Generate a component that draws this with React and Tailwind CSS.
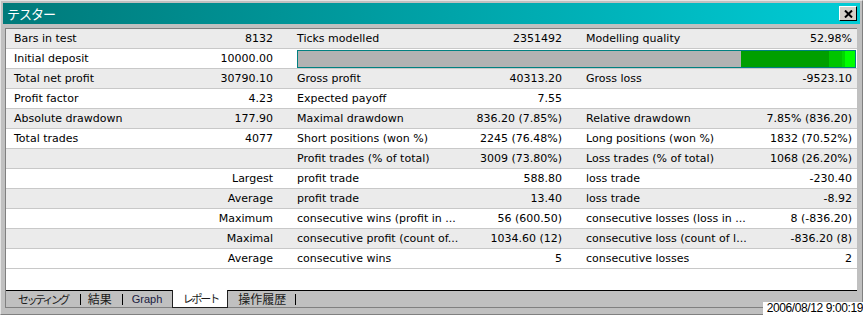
import React from 'react'

const rows = [
  ['Bars in test', '8132', 'Ticks modelled', '2351492', 'Modelling quality', '52.98%'],
  ['Initial deposit', '10000.00', null],
  ['Total net profit', '30790.10', 'Gross profit', '40313.20', 'Gross loss', '-9523.10'],
  ['Profit factor', '4.23', 'Expected payoff', '7.55', '', ''],
  ['Absolute drawdown', '177.90', 'Maximal drawdown', '836.20 (7.85%)', 'Relative drawdown', '7.85% (836.20)'],
  ['Total trades', '4077', 'Short positions (won %)', '2245 (76.48%)', 'Long positions (won %)', '1832 (70.52%)'],
  ['', '', 'Profit trades (% of total)', '3009 (73.80%)', 'Loss trades (% of total)', '1068 (26.20%)'],
  ['', 'Largest', 'profit trade', '588.80', 'loss trade', '-230.40'],
  ['', 'Average', 'profit trade', '13.40', 'loss trade', '-8.92'],
  ['', 'Maximum', 'consecutive wins (profit in ...', '56 (600.50)', 'consecutive losses (loss in ...', '8 (-836.20)'],
  ['', 'Maximal', 'consecutive profit (count of...', '1034.60 (12)', 'consecutive loss (count of l...', '-836.20 (8)'],
  ['', 'Average', 'consecutive wins', '5', 'consecutive losses', '2'],
]

function QualityBar() {
  return (
    <div className="ml-[12px] mr-[1px] flex h-[18px] flex-1 border border-[#008080]">
      <div className="w-[443px] bg-[#b2b2b2]" />
      <div className="w-[88px] bg-[#009f00]" />
      <div className="w-[13px] bg-[#00c400]" />
      <div className="w-[3px] bg-[#00d800]" />
      <div className="flex-1 bg-[#00ff00]" />
    </div>
  )
}

function Row({ cells, index }) {
  const bg = index % 2 === 0 ? 'bg-[#ebebeb]' : 'bg-white'
  return (
    <div className={`flex h-[20px] items-center border-b border-[#c8c8c8] ${bg}`}>
      <div className="flex w-[279px] justify-between pt-px pl-[8px] pr-[12px]">
        <span>{cells[0]}</span>
        <span>{cells[1]}</span>
      </div>
      {cells[2] === null ? (
        <QualityBar />
      ) : (
        <>
          <div className="flex w-[289px] justify-between pt-px pl-[12px] pr-[12px]">
            <span>{cells[2]}</span>
            <span>{cells[3]}</span>
          </div>
          <div className="flex w-[283px] justify-between pt-px pl-[12px] pr-[5px]">
            <span>{cells[4]}</span>
            <span>{cells[5]}</span>
          </div>
        </>
      )}
    </div>
  )
}

function Sep() {
  return <div className="h-[11px] w-px bg-black" />
}

export default function App() {
  return (
    <div className="relative flex h-[315px] w-[863px] flex-col border border-t-[#e4e4e4] border-l-[#e4e4e4] border-r-[#808080] border-b-[#808080] bg-[#c0c0c0] px-[2px] pt-[2px] pb-[6px]">
      {/* title bar */}
      <div className="flex h-[21px] items-center justify-between bg-gradient-to-r from-[#007a7a] to-[#00ccd6] pl-[4px] pr-[3px]">
        <span className="text-[13px] leading-none tracking-[-1px] text-white [font-family:'Noto_Sans_CJK_JP',sans-serif]">
          テスター
        </span>
        <div className="flex h-[15px] w-[18px] items-center justify-center border border-t-white border-l-white border-r-black border-b-black bg-[#d4d0c8]">
          <svg width="9" height="8" viewBox="0 0 9 8">
            <path d="M1 0.5 L8 7.5 M8 0.5 L1 7.5" stroke="black" strokeWidth="2" />
          </svg>
        </div>
      </div>

      {/* report area */}
      <div className="mt-[4px] ml-[2px] mr-[3px] flex flex-1 flex-col border-t border-l border-b border-[#808080] bg-white text-[11px] text-black [font-family:'DejaVu_Sans',sans-serif]">
        {rows.map((cells, i) => (
          <Row key={i} cells={cells} index={i} />
        ))}
        <div className="flex-1" />
        {/* tabs */}
        <div className="flex h-[17px] items-center border-t border-black bg-[#c0c0c0] text-[#1a1a1a] [font-family:'Noto_Sans_CJK_JP',sans-serif]">
          <span className="ml-[12px] text-[11px] tracking-[-2.6px]">セッティング</span>
          <div className="ml-[12px]"><Sep /></div>
          <span className="ml-[7px] text-[12px]">結果</span>
          <div className="ml-[10px]"><Sep /></div>
          <span className="ml-[9px] text-[11px] text-[#1a1a40] [font-family:'Liberation_Sans',sans-serif]">Graph</span>
          <div className="-mt-px ml-[10px] flex h-[18px] w-[56px] items-center justify-center self-start border-x border-b border-[#202020] bg-white text-[11px] tracking-[-2.2px]">
            レポート
          </div>
          <span className="ml-[10px] text-[12px]">操作履歴</span>
          <div className="ml-[9px]"><Sep /></div>
        </div>
      </div>

      <div className="absolute right-[-1px] bottom-[-1px] h-[13px] w-[100px] bg-white text-right text-[12px] leading-[13px] text-black [font-family:'Liberation_Sans',sans-serif] tracking-[-0.4px]">
        2006/08/12 9:00:19
      </div>
    </div>
  )
}
